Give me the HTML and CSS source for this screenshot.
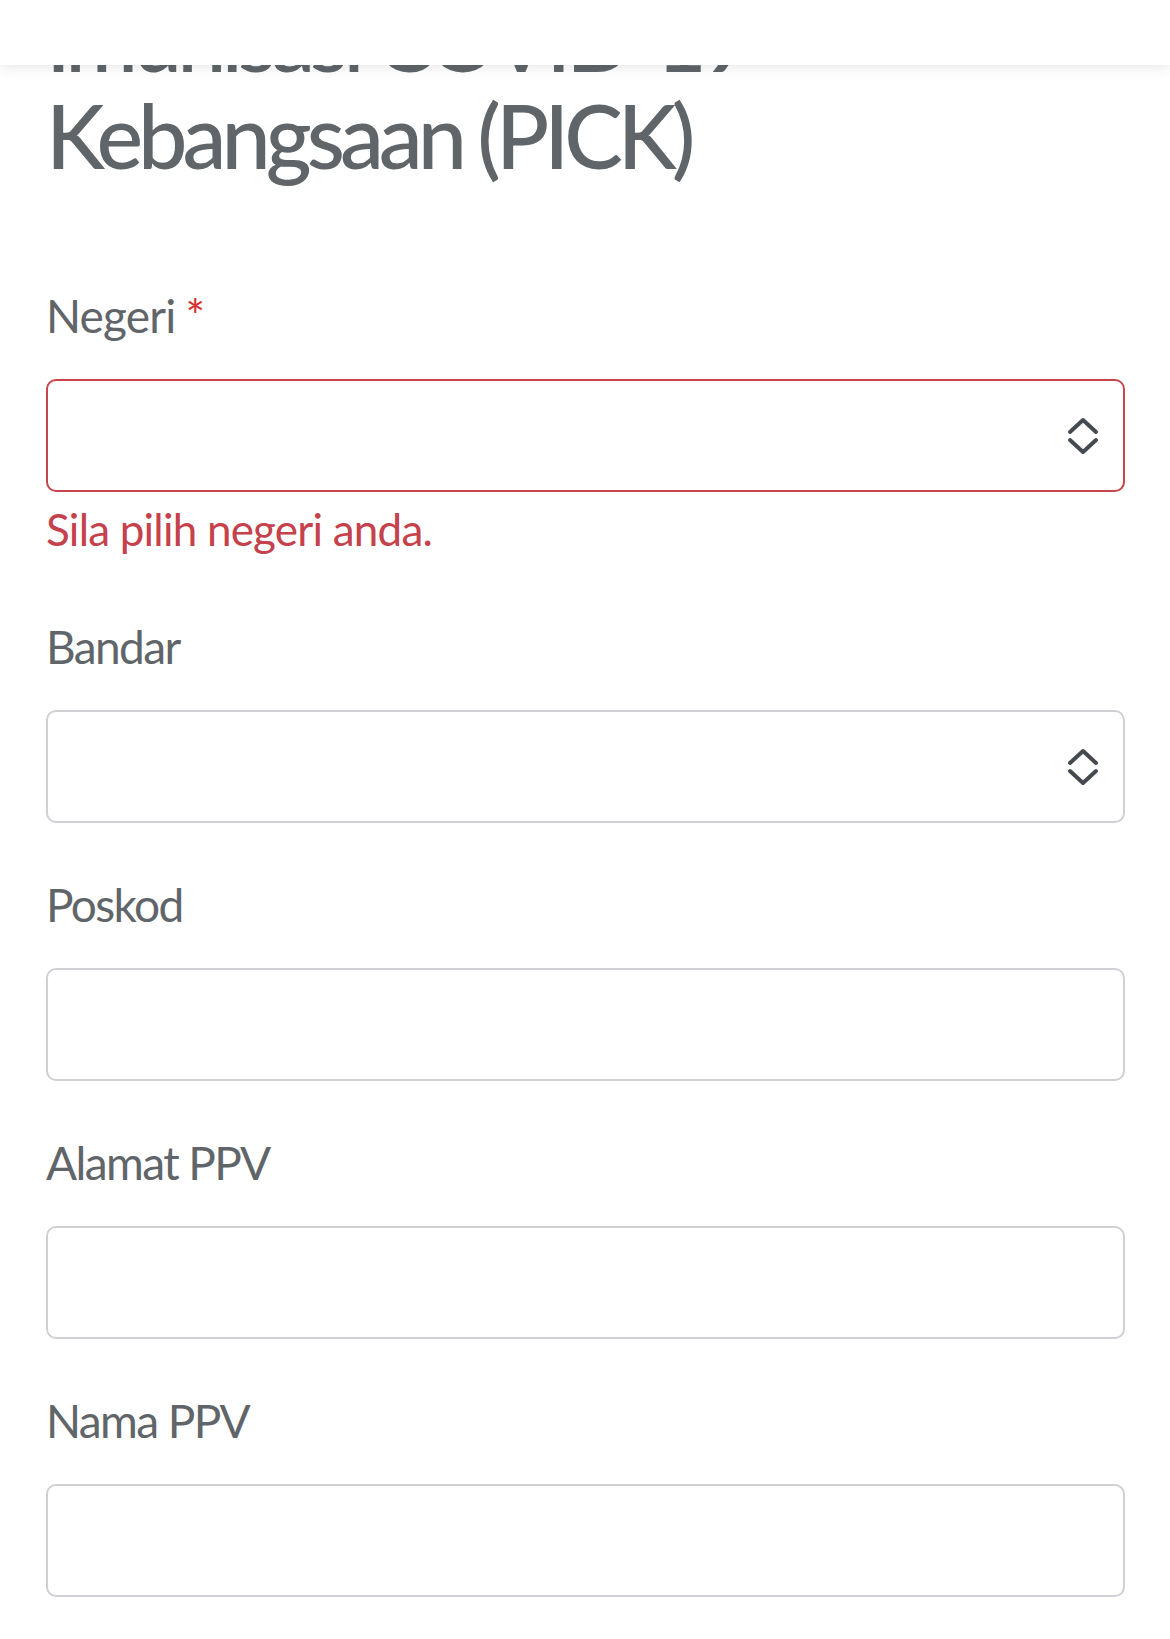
FILE: index.html
```html
<!DOCTYPE html>
<html lang="ms">
<head>
<meta charset="utf-8">
<title>PICK</title>
<link rel="stylesheet" href="styles.css">
</head>
<body>
<header class="topbar"></header>
<main class="page">
  <h1 class="title">Program<br>Imunisasi COVID-19<br>Kebangsaan (PICK)</h1>
  <form class="form">
    <div class="field field-error">
      <label class="label label-first">Negeri<span class="req">*</span></label>
      <div class="select invalid">
        <svg class="chev" viewBox="0 0 32 38" width="32" height="38"><polyline points="3,15 16,3 29,15"/><polyline points="3,23 16,35 29,23"/></svg>
      </div>
      <div class="error">Sila pilih negeri anda.</div>
    </div>
    <div class="field">
      <label class="label">Bandar</label>
      <div class="select">
        <svg class="chev" viewBox="0 0 32 38" width="32" height="38"><polyline points="3,15 16,3 29,15"/><polyline points="3,23 16,35 29,23"/></svg>
      </div>
    </div>
    <div class="field">
      <label class="label">Poskod</label>
      <div class="input"></div>
    </div>
    <div class="field">
      <label class="label">Alamat PPV</label>
      <div class="input"></div>
    </div>
    <div class="field">
      <label class="label">Nama PPV</label>
      <div class="input"></div>
    </div>
  </form>
</main>
</body>
</html>
```

FILE: styles.css
```css
html, body {
  margin: 0;
  padding: 0;
  background: #ffffff;
}
body {
  font-family: Lato, "Noto Sans", sans-serif;
  color: #5f6569;
  overflow: hidden;
}
.topbar {
  position: fixed;
  top: 0;
  left: 0;
  right: 0;
  height: 65px;
  background: #ffffff;
  box-shadow: 0 3px 12px rgba(0, 0, 0, 0.09);
  z-index: 10;
}
.page {
  padding: 0 45px 0 46px;
}
.title {
  margin: -107px 0 0 0;
  font-size: 88px;
  line-height: 97px;
  font-weight: 500;
  letter-spacing: -5px;
  word-spacing: -2px;
  color: #5f6569;
}
.form {
  display: flex;
  flex-direction: column;
  gap: 54px;
  margin-top: 104px;
}
.field {
  display: flex;
  flex-direction: column;
}
.label {
  font-size: 46px;
  line-height: 56px;
  margin-bottom: 35px;
  letter-spacing: -1.6px;
}
.label-first {
  letter-spacing: -0.8px;
}
.req {
  color: #d7322f;
  margin-left: 10px;
}
.select, .input {
  height: 109px;
  border: 2px solid #cfd0d3;
  border-radius: 10px;
  display: flex;
  align-items: center;
  justify-content: flex-end;
  padding-right: 24px;
}
.select.invalid {
  border-color: #c8454d;
}
.chev {
  fill: none;
  stroke: #454a50;
  stroke-width: 4;
  stroke-linecap: round;
  stroke-linejoin: round;
}
.error {
  color: #c5414b;
  font-size: 44px;
  line-height: 52px;
  margin-top: 11px;
  margin-bottom: 10px;
  letter-spacing: -0.8px;
}
```
